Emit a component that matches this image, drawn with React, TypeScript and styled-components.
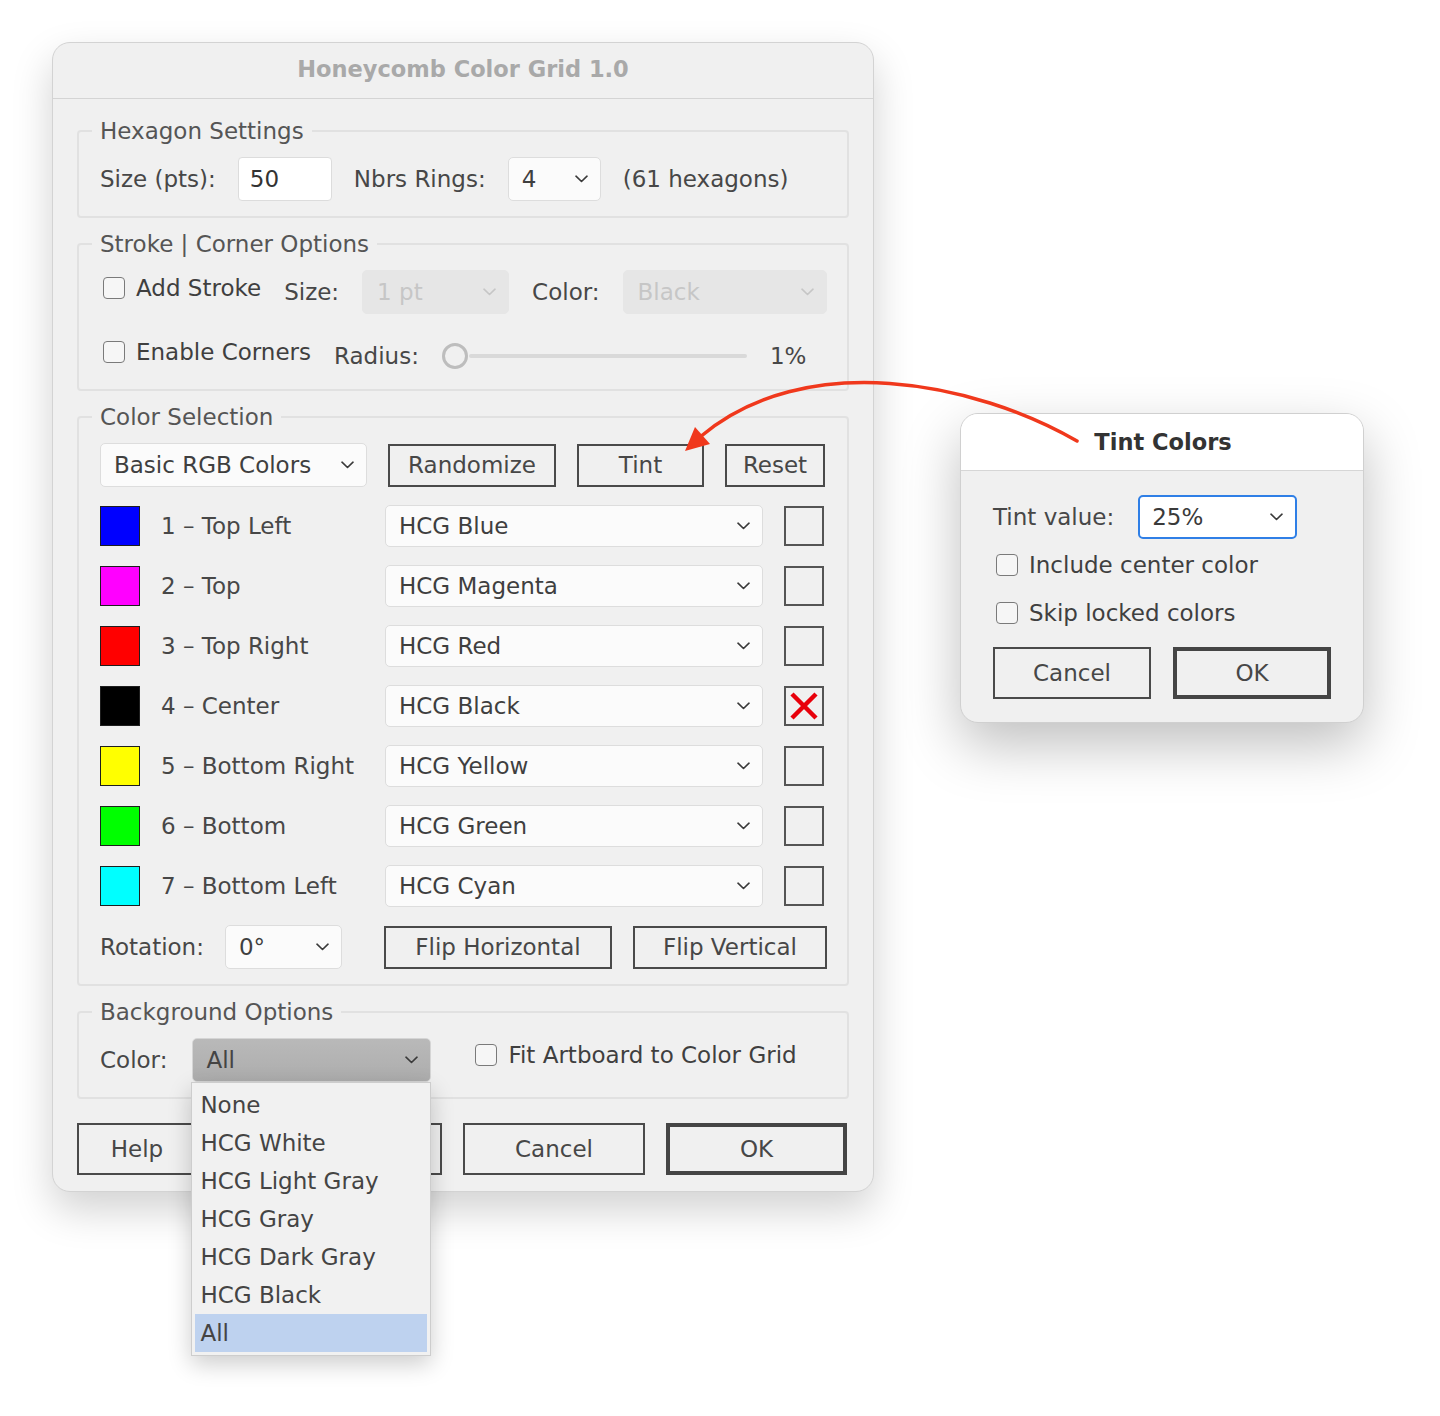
import styled, { createGlobalStyle, css } from "styled-components";

const GlobalStyle = createGlobalStyle`
  html, body {
    margin: 0;
    padding: 0;
    background: #ffffff;
  }
  body {
    font-family: "DejaVu Sans", "Liberation Sans", sans-serif;
    color: #474747;
  }
  * {
    box-sizing: border-box;
  }
`;

const Page = styled.div`
  position: relative;
  width: 1440px;
  height: 1416px;
  display: flex;
  align-items: flex-start;
  gap: 86px;
  padding: 42px 0 0 52px;
`;

const MainDialog = styled.div`
  position: relative;
  width: 822px;
  height: 1150px;
  background: #f0f0f0;
  border: 1px solid #d3d3d3;
  border-radius: 18px;
  box-shadow: 0 18px 40px rgba(0, 0, 0, 0.18);
`;

const TitleBar = styled.div`
  height: 56px;
  display: flex;
  align-items: center;
  justify-content: center;
  padding-bottom: 4px;
  border-bottom: 1px solid #d4d4d4;
`;

const DialogTitle = styled.div<{ $dim?: boolean }>`
  font-size: 22.5px;
  font-weight: bold;
  color: ${(p) => (p.$dim ? "#a9a9a9" : "#333333")};
`;

const DialogBody = styled.div`
  display: flex;
  flex-direction: column;
  gap: 10px;
  padding: 16px 24px 0 24px;
`;

const Group = styled.fieldset<{ $gap?: number; $bottom?: number }>`
  margin: 0;
  border: 2px solid #e1e1e1;
  border-radius: 4px;
  padding: 10px 21px ${(p) => p.$bottom ?? 15}px 21px;
  min-width: 0;
  display: flex;
  flex-direction: column;
  gap: ${(p) => p.$gap ?? 18}px;
`;

const GroupLegend = styled.legend`
  font-size: 23px;
  line-height: 32px;
  color: #555555;
  padding: 0 8px;
  margin-left: -8px;
`;

const Row = styled.div<{ $gap?: number }>`
  display: flex;
  align-items: center;
  gap: ${(p) => p.$gap ?? 22}px;
  height: 44px;
`;

const Label = styled.span`
  font-size: 23px;
  color: #474747;
  white-space: nowrap;
`;

const TextField = styled.div<{ $width: number }>`
  width: ${(p) => p.$width}px;
  height: 44px;
  background: #ffffff;
  border: 1px solid #dcdcdc;
  border-radius: 4px;
  display: flex;
  align-items: center;
  padding-left: 11px;
  font-size: 23px;
  color: #333333;
`;

type SelectKind = "normal" | "disabled" | "active" | "focused";

const SelectBox = styled.div<{ $width: number; $height?: number; $kind: SelectKind }>`
  position: relative;
  flex: none;
  width: ${(p) => p.$width}px;
  height: ${(p) => p.$height ?? 44}px;
  display: flex;
  align-items: center;
  justify-content: space-between;
  padding: 0 12px 0 13px;
  border-radius: 5px;
  font-size: 23px;
  ${(p) =>
    p.$kind === "normal" &&
    css`
      background: #fbfbfb;
      border: 1px solid #dddddd;
      color: #3f3f3f;
    `}
  ${(p) =>
    p.$kind === "disabled" &&
    css`
      background: #e6e6e6;
      border: 1px solid #e6e6e6;
      color: #c6c6c6;
      padding-left: 14px;
    `}
  ${(p) =>
    p.$kind === "active" &&
    css`
      background: linear-gradient(#b9b9b9, #adadad);
      border: 1px solid #d5d5d5;
      color: #444444;
    `}
  ${(p) =>
    p.$kind === "focused" &&
    css`
      background: #ffffff;
      border: 2px solid #2f7fe6;
      color: #3a3a3a;
      padding-left: 12px;
    `}
`;

const Chevron = ({ color = "#3a3a3a" }: { color?: string }) => (
  <svg width="13" height="8" viewBox="0 0 13 8" fill="none">
    <polyline points="1,1.2 6.5,6.5 12,1.2" stroke={color} strokeWidth="1.6" strokeLinecap="round" strokeLinejoin="round" />
  </svg>
);

type SelectProps = {
  value: string;
  width: number;
  height?: number;
  kind?: SelectKind;
  children?: React.ReactNode;
};

const Select = ({ value, width, height, kind = "normal", children }: SelectProps) => (
  <SelectBox $width={width} $height={height} $kind={kind}>
    <span>{value}</span>
    <Chevron color={kind === "disabled" ? "#c6c6c6" : "#3a3a3a"} />
    {children}
  </SelectBox>
);

const CheckItem = styled.label<{ $lift?: number; $indent?: number }>`
  display: flex;
  align-items: center;
  gap: 11px;
  font-size: 23px;
  color: #3f3f3f;
  white-space: nowrap;
  margin-left: ${(p) => p.$indent ?? 3}px;
  ${(p) => p.$lift && `margin-bottom: ${p.$lift}px;`}
`;

const CheckBox = styled.span`
  width: 22px;
  height: 22px;
  flex: none;
  border: 1.5px solid #7a7a7a;
  border-radius: 4px;
  background: #f6f6f6;
`;

const PushButton = styled.div<{ $width: number; $height?: number; $primary?: boolean; $offset?: number }>`
  flex: none;
  width: ${(p) => p.$width}px;
  height: ${(p) => p.$height ?? 43}px;
  margin-left: ${(p) => p.$offset ?? 0}px;
  display: flex;
  align-items: center;
  justify-content: center;
  border: ${(p) => (p.$primary ? "4px solid #454545" : "2px solid #4a4a4a")};
  font-size: 23px;
  color: #474747;
`;

const Slider = styled.div`
  position: relative;
  width: 305px;
  height: 28px;
  display: flex;
  align-items: center;
`;

const SliderTrack = styled.div`
  margin-left: 27px;
  width: 278px;
  height: 4px;
  border-radius: 2px;
  background: #d9d9d9;
`;

const SliderKnob = styled.div`
  position: absolute;
  left: 0;
  top: 1px;
  width: 26px;
  height: 26px;
  border-radius: 50%;
  border: 3px solid #bdbdbd;
  background: #f0f0f0;
`;

const ColorGrid = styled.div`
  display: grid;
  grid-template-columns: 40px 203px 378px 40px;
  column-gap: 21px;
  row-gap: 18px;
  align-items: center;
`;

const Swatch = styled.div<{ $color: string }>`
  width: 40px;
  height: 40px;
  background: ${(p) => p.$color};
  border: 1px solid #1e1e1e;
`;

const LockBox = styled.div`
  width: 40px;
  height: 40px;
  border: 2px solid #555555;
  display: flex;
  align-items: center;
  justify-content: center;
`;

const ButtonBar = styled.div`
  display: flex;
  gap: 21px;
  margin-top: 14px;
`;

const Menu = styled.div`
  position: absolute;
  z-index: 5;
  top: 43px;
  left: -2px;
  width: 240px;
  padding: 3px;
  background: #f1f1f1;
  border: 1px solid #cdcdcd;
  box-shadow: 0 8px 22px rgba(0, 0, 0, 0.2);
  color: #444444;
`;

const MenuItem = styled.div<{ $selected?: boolean }>`
  height: 38px;
  display: flex;
  align-items: center;
  padding-left: 5px;
  font-size: 23px;
  background: ${(p) => (p.$selected ? "#bed2ef" : "transparent")};
`;

const TintDialog = styled.div`
  margin-top: 371px;
  width: 404px;
  height: 310px;
  background: #f0f0f0;
  border: 1px solid #d0d0d0;
  border-radius: 18px;
  overflow: hidden;
  box-shadow: 0 22px 55px rgba(0, 0, 0, 0.25);
`;

const TintTitleBar = styled.div`
  height: 57px;
  background: #ffffff;
  border-bottom: 1px solid #d6d6d6;
  display: flex;
  align-items: center;
  justify-content: center;
  padding-left: 2px;
`;

const TintBody = styled.div`
  display: flex;
  flex-direction: column;
  padding: 24px 32px 0 32px;
`;

const TintChecks = styled.div`
  display: flex;
  flex-direction: column;
  gap: 16px;
  margin: 10px 0 18px 0;
`;

const CheckRow = styled.div`
  height: 32px;
  display: flex;
  align-items: center;
`;

const ArrowOverlay = styled.svg`
  position: absolute;
  inset: 0;
  z-index: 10;
  pointer-events: none;
`;

const colors = [
  { color: "#0000ff", label: "1 – Top Left", value: "HCG Blue" },
  { color: "#ff00ff", label: "2 – Top", value: "HCG Magenta" },
  { color: "#ff0000", label: "3 – Top Right", value: "HCG Red" },
  { color: "#000000", label: "4 – Center", value: "HCG Black", locked: true },
  { color: "#ffff00", label: "5 – Bottom Right", value: "HCG Yellow" },
  { color: "#00ff00", label: "6 – Bottom", value: "HCG Green" },
  { color: "#00ffff", label: "7 – Bottom Left", value: "HCG Cyan" },
];

const backgrounds = ["None", "HCG White", "HCG Light Gray", "HCG Gray", "HCG Dark Gray", "HCG Black", "All"];

const App = () => {
  return (
    <>
      <GlobalStyle />
      <Page>
        <MainDialog>
          <TitleBar>
            <DialogTitle $dim>Honeycomb Color Grid 1.0</DialogTitle>
          </TitleBar>
          <DialogBody>
            <Group>
              <GroupLegend>Hexagon Settings</GroupLegend>
              <Row $gap={22}>
                <Label>Size (pts):</Label>
                <TextField $width={94}>50</TextField>
                <Label>Nbrs Rings:</Label>
                <Select value="4" width={93} />
                <Label>(61 hexagons)</Label>
              </Row>
            </Group>

            <Group $gap={20} $bottom={11}>
              <GroupLegend>Stroke | Corner Options</GroupLegend>
              <Row $gap={23}>
                <CheckItem $lift={9}>
                  <CheckBox />
                  Add Stroke
                </CheckItem>
                <Label>Size:</Label>
                <Select value="1 pt" width={147} kind="disabled" />
                <Label>Color:</Label>
                <Select value="Black" width={204} kind="disabled" />
              </Row>
              <Row $gap={23}>
                <CheckItem $lift={9}>
                  <CheckBox />
                  Enable Corners
                </CheckItem>
                <Label>Radius:</Label>
                <Slider>
                  <SliderKnob />
                  <SliderTrack />
                </Slider>
                <Label>1%</Label>
              </Row>
            </Group>

            <Group>
              <GroupLegend>Color Selection</GroupLegend>
              <Row $gap={21}>
                <Select value="Basic RGB Colors" width={267} />
                <PushButton $width={168}>Randomize</PushButton>
                <PushButton $width={127}>Tint</PushButton>
                <PushButton $width={100}>Reset</PushButton>
              </Row>
              <ColorGrid>
                {colors.map((c) => (
                  <>
                    <Swatch key={c.label + "s"} $color={c.color} />
                    <Label key={c.label}>{c.label}</Label>
                    <Select key={c.value} value={c.value} width={378} height={42} />
                    <LockBox key={c.label + "l"}>
                      {c.locked && (
                        <svg width="30" height="30" viewBox="0 0 30 30">
                          <path d="M3 3 L27 27 M27 3 L3 27" stroke="#e8000b" strokeWidth="4.5" />
                        </svg>
                      )}
                    </LockBox>
                  </>
                ))}
              </ColorGrid>
              <Row $gap={21}>
                <Label>Rotation:</Label>
                <Select value="0°" width={117} />
                <PushButton $width={228} $offset={21}>
                  Flip Horizontal
                </PushButton>
                <PushButton $width={194}>Flip Vertical</PushButton>
              </Row>
            </Group>

            <Group>
              <GroupLegend>Background Options</GroupLegend>
              <Row $gap={25}>
                <Label>Color:</Label>
                <Select value="All" width={239} kind="active">
                  <Menu>
                    {backgrounds.map((b) => (
                      <MenuItem key={b} $selected={b === "All"}>
                        {b}
                      </MenuItem>
                    ))}
                  </Menu>
                </Select>
                <CheckItem $lift={10} $indent={19}>
                  <CheckBox />
                  Fit Artboard to Color Grid
                </CheckItem>
              </Row>
            </Group>

            <ButtonBar>
              <PushButton $width={120} $height={52}>
                Help
              </PushButton>
              <PushButton $width={224} $height={52} />
              <PushButton $width={182} $height={52}>
                Cancel
              </PushButton>
              <PushButton $width={181} $height={52} $primary>
                OK
              </PushButton>
            </ButtonBar>
          </DialogBody>
        </MainDialog>

        <TintDialog>
          <TintTitleBar>
            <DialogTitle>Tint Colors</DialogTitle>
          </TintTitleBar>
          <TintBody>
            <Row $gap={24}>
              <Label>Tint value:</Label>
              <Select value="25%" width={159} kind="focused" />
            </Row>
            <TintChecks>
              <CheckRow>
                <CheckItem>
                  <CheckBox />
                  Include center color
                </CheckItem>
              </CheckRow>
              <CheckRow>
                <CheckItem>
                  <CheckBox />
                  Skip locked colors
                </CheckItem>
              </CheckRow>
            </TintChecks>
            <Row $gap={22} style={{ height: 52 }}>
              <PushButton $width={158} $height={52}>
                Cancel
              </PushButton>
              <PushButton $width={158} $height={52} $primary>
                OK
              </PushButton>
            </Row>
          </TintBody>
        </TintDialog>

        <ArrowOverlay width="1440" height="1416" viewBox="0 0 1440 1416">
          <path d="M1077 441 C 975 382, 805 348, 700 437" fill="none" stroke="#f0381c" strokeWidth="3.5" strokeLinecap="round" />
          <polygon points="685,451 710,444 695,427" fill="#f0381c" />
        </ArrowOverlay>
      </Page>
    </>
  );
};

export default App;
